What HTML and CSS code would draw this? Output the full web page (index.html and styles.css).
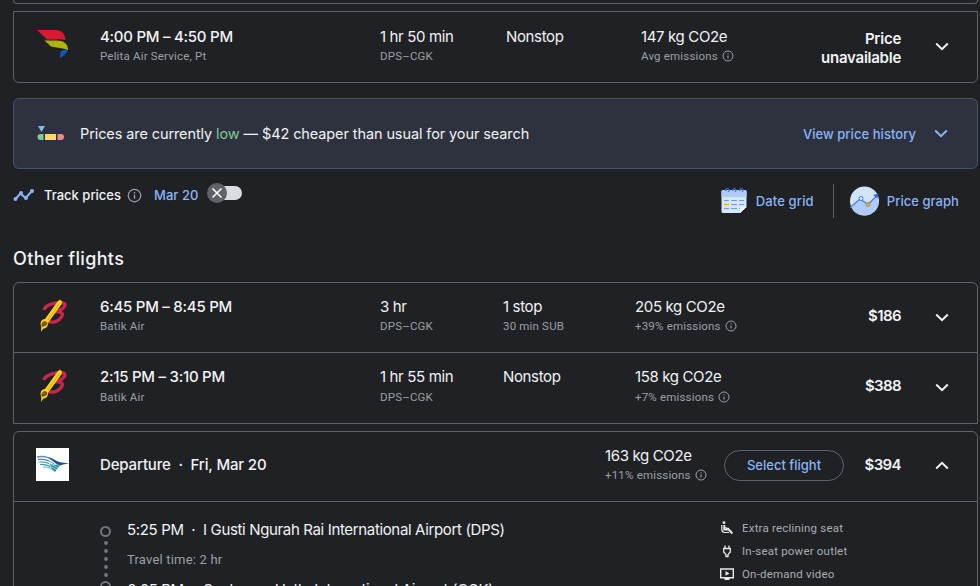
FILE: index.html
```html
<!doctype html>
<html lang="en">
  <head>
    <meta charset="UTF-8">
    <meta name="viewport" content="width=device-width, initial-scale=1.0">
    <title>Flights</title>
    <link rel="stylesheet" href="styles.css">
  </head>
  <body>
    <!-- Shared icons -->
    <svg class="sprite" width="0" height="0">
      <symbol id="info" viewBox="0 0 12 12">
        <circle cx="6" cy="6" r="5" fill="none" stroke="currentColor" stroke-width="1"/>
        <path d="M6 5.4v3.2M6 3.2v1.1" stroke="currentColor" stroke-width="1.1"/>
      </symbol>
      <symbol id="chevron" viewBox="0 0 14 9">
        <path d="M1.2 1.5L7 7.2l5.8-5.7" fill="none" stroke="currentColor" stroke-width="2"/>
      </symbol>
      <symbol id="batik" viewBox="0 0 30 34">
        <path d="M5 11C6 6 17 2.500 24 4c5 1.500 0 7-9 9 8-1 10 2 7 5.500-3 3.800-8 5.500-13 4" fill="none" stroke="#c9264f" stroke-width="3.400"/>
        <path d="M18.500 2.500l2.500-2 2 2-.3 2.500L9 24c0 4-2 5-5 6l-2 3 .3-5C.7 24 2 20 6 20z" fill="#fbd21d"/>
        <path d="M3 27c0-4 2-5 4-4s0 4-3 4z" fill="#8a6212" stroke="#5b390d" stroke-width="1"/>
        <path d="M20.500 4.500L9 21" stroke="#c79c10" stroke-width=".7"/>
      </symbol>
    </svg>

    <div class="card card-prev"></div>

    <div class="card card-last">
      <div class="row row-top">
        <div class="logo">
          <svg width="32" height="30" viewBox="0 0 32 30">
            <path d="M0 0h18c7 0 10 4 10.500 10C23 8.500 16 10 10 9.500z" fill="#d71a30"/>
            <path d="M7.500 10.500H19c8 0 12 3 12 10-4-3-9-2-17-4z" fill="#b0b20d"/>
            <path d="M23 28c0-6 1-9 7.500-8-1 3.500-4 6.500-7.500 8z" fill="#1257c0"/>
          </svg>
        </div>
        <div><div class="main time">4:00 PM – 4:50 PM</div><div class="sub">Pelita Air Service, Pt</div></div>
        <div><div class="main">1 hr 50 min</div><div class="sub">DPS–CGK</div></div>
        <div><div class="main">Nonstop</div></div>
        <div><div class="main">147 kg CO2e</div><div class="sub">Avg emissions <svg class="info"><use href="#info"/></svg></div></div>
        <div class="price price-none">Price<br>unavailable</div>
        <svg class="chevron"><use href="#chevron"/></svg>
      </div>
    </div>

    <!-- Price insight -->
    <div class="insight">
      <svg class="gauge" width="28" height="16" viewBox="0 0 28 16">
        <path d="M1 0h7L4.500 6z" fill="#8ab4f8"/>
        <path d="M6.500 8v6H3.500a3 3 0 0 1 0-6z" fill="#81c995"/>
        <path d="M8 8h11v6H8z" fill="#fdd663"/>
        <path d="M20.500 8H24a3 3 0 0 1 0 6h-3.500z" fill="#f28b82"/>
      </svg>
      <span class="insight-text">Prices are currently <span class="low">low</span> — $42 cheaper than usual for your search</span>
      <span class="link history">View price history</span>
      <svg class="chevron"><use href="#chevron"/></svg>
    </div>

    <!-- Tracking and tools -->
    <div class="tools">
      <svg class="trend" width="22" height="14" viewBox="0 0 22 14">
        <path d="M2.500 11l5-5.500 5 4.500 7-7.500" fill="none" stroke="#8ab4f8" stroke-width="2"/>
        <g fill="#8ab4f8"><circle cx="2.500" cy="11" r="2"/><circle cx="8" cy="5" r="2"/><circle cx="13" cy="10" r="2"/><circle cx="19" cy="3" r="2"/></g>
      </svg>
      <span class="track">Track prices</span>
      <svg class="info info-lg"><use href="#info"/></svg>
      <span class="link date">Mar 20</span>
      <span class="switch">
        <svg width="20" height="20" viewBox="0 0 20 20">
          <circle cx="10" cy="10" r="10" fill="#5f6368"/>
          <path d="M5.500 5.500l9 9M14.500 5.500l-9 9" stroke="#fff" stroke-width="1.500"/>
        </svg>
      </span>
      <div class="views">
        <svg width="26" height="27" viewBox="0 0 26 27">
          <path d="M2 3h22a1.500 1.500 0 0 1 1.500 1.500V20L19 26H2a1.500 1.500 0 0 1-1.500-1.500v-20A1.500 1.500 0 0 1 2 3z" fill="#d6e6fd"/>
          <path d="M2 3h22a1.500 1.500 0 0 1 1.500 1.500V10H.5V4.500A1.500 1.500 0 0 1 2 3z" fill="#aecbfa"/>
          <path d="M19 26v-6h6.500z" fill="#f5f9ff"/>
          <g fill="none" stroke="#3d72df" stroke-width="1.200"><path d="M5 4a1.600 1.600 0 1 1 2 .7M12 4a1.600 1.600 0 1 1 2 .7M19 4a1.600 1.600 0 1 1 2 .7"/></g>
          <path d="M3 13.500h5M10 13.500h6M18 13.500h5M10 17.500h6M18 17.500h5M3 21.500h5M10 21.500h6M18 21.500h1" stroke="#669df6" stroke-width="1.200"/>
          <path d="M3 17.500h5" stroke="#f9ab00" stroke-width="1.300"/>
        </svg>
        <span class="link grid-link">Date grid</span>
        <span class="divider"></span>
        <svg width="30" height="30" viewBox="0 0 30 30">
          <circle cx="14.500" cy="15" r="14.500" fill="#d2e3fc"/>
          <path d="M1 20l10-7 8 5 8-7c4 8-2 18-12 18.500C8 29.500 3 26 1 20z" fill="#aecbfa"/>
          <path d="M0 21.500L10 13l8 5.500 8-8" fill="none" stroke="#4479df" stroke-width="1.200"/>
          <path d="M23 9l5.500-1.500-1 5z" fill="#3367d6"/>
          <circle cx="11" cy="12.500" r="2" fill="#e8f0fe" stroke="#4479df"/>
          <circle cx="18" cy="18.500" r="2" fill="#f9ab00" stroke="#7d83a0" stroke-width=".7"/>
        </svg>
        <span class="link graph-link">Price graph</span>
      </div>
    </div>

    <h3>Other flights</h3>

    <div class="card flights">
      <div class="row">
        <div class="logo batik"><svg width="30" height="34"><use href="#batik"/></svg></div>
        <div><div class="main time">6:45 PM – 8:45 PM</div><div class="sub">Batik Air</div></div>
        <div><div class="main">3 hr</div><div class="sub">DPS–CGK</div></div>
        <div><div class="main">1 stop</div><div class="sub">30 min SUB</div></div>
        <div><div class="main">205 kg CO2e</div><div class="sub">+39% emissions <svg class="info"><use href="#info"/></svg></div></div>
        <div class="price">$186</div>
        <svg class="chevron"><use href="#chevron"/></svg>
      </div>
      <div class="row">
        <div class="logo batik"><svg width="30" height="34"><use href="#batik"/></svg></div>
        <div><div class="main time">2:15 PM – 3:10 PM</div><div class="sub">Batik Air</div></div>
        <div><div class="main">1 hr 55 min</div><div class="sub">DPS–CGK</div></div>
        <div><div class="main">Nonstop</div></div>
        <div><div class="main">158 kg CO2e</div><div class="sub">+7% emissions <svg class="info"><use href="#info"/></svg></div></div>
        <div class="price">$388</div>
        <svg class="chevron"><use href="#chevron"/></svg>
      </div>
    </div>

    <!-- Expanded flight -->
    <div class="card expanded">
      <div class="row row-open">
        <div class="logo garuda">
          <svg width="33" height="33" viewBox="0 0 33 33">
            <path d="M1 9c7-1.500 12 0 17 4" fill="none" stroke="#5f8fb8" stroke-width="1.300"/>
            <path d="M2 11.500c6-1 11 1 16 4" fill="none" stroke="#2f6c9c" stroke-width="1.200"/>
            <path d="M3 14c6-.5 10 1 15 4" fill="none" stroke="#55a7b7" stroke-width="1.200"/>
            <path d="M4 16.500c5-.3 9 1 14 4" fill="none" stroke="#3f9cab" stroke-width="1.200"/>
            <path d="M7 19c5-.3 8 1 12 4" fill="none" stroke="#81c3c4" stroke-width="1.200"/>
            <path d="M12 9.500c6 .5 9 5 14 5l7 1-6 1c-2 1-4 1-5 2-3-4-6-7-10-9z" fill="#17528a"/>
            <path d="M14 16l10 1.500-5 6.500-3-3z" fill="#168f9b"/>
            <path d="M13 12.500l11 5.500M13 15l9 5M14 18l7 4" stroke="#fff" stroke-width=".6"/>
          </svg>
        </div>
        <div class="main leg">Departure &nbsp;·&nbsp; Fri, Mar 20</div>
        <div><div class="main">163 kg CO2e</div><div class="sub">+11% emissions <svg class="info"><use href="#info"/></svg></div></div>
        <button class="select">Select flight</button>
        <div class="price">$394</div>
        <svg class="chevron up"><use href="#chevron"/></svg>
      </div>
      <div class="details">
        <div class="rail">
          <span class="stop"></span>
          <span class="dot"></span><span class="dot"></span><span class="dot"></span><span class="dot"></span><span class="dot"></span>
          <span class="stop"></span>
        </div>
        <div class="legs">
          <div class="airport">5:25 PM &nbsp;·&nbsp; I Gusti Ngurah Rai International Airport (DPS)</div>
          <div class="travel">Travel time: 2 hr</div>
          <div class="airport">6:25 PM &nbsp;·&nbsp; Soekarno-Hatta International Airport (CGK)</div>
        </div>
        <ul class="amenities">
          <li>
            <svg width="14" height="14" viewBox="0 0 14 14" fill="none" stroke="#e8eaed">
              <circle cx="4" cy="1.700" r="1.400" fill="#e8eaed" stroke="none"/>
              <path d="M1.800 4v4.500c0 2 1 3 3 3H9" stroke-width="1.200"/>
              <path d="M4.300 4v4.500h4.500l3.500 4" stroke-width="2"/>
              <path d="M5 6.500c1.500 1 2.500 1 4 .8" stroke-width="1.200"/>
            </svg>
            Extra reclining seat
          </li>
          <li>
            <svg width="14" height="14" viewBox="0 0 14 14" fill="none" stroke="#e8eaed" stroke-width="1.300">
              <path d="M5 1.500v3M9 1.500v3M3.700 4.500h6.600v3.500L8 10.500V12.500H6v-2L3.700 8z"/>
            </svg>
            In-seat power outlet
          </li>
          <li>
            <svg width="14" height="14" viewBox="0 0 14 14" fill="none" stroke="#e8eaed" stroke-width="1.400">
              <path d="M.7 2h12.600v8.800H.7zM4.500 12.200h5"/>
              <path d="M5.500 4v4.800l4-2.400z" fill="#e8eaed" stroke="none"/>
            </svg>
            On-demand video
          </li>
        </ul>
      </div>
    </div>
  </body>
</html>
```
FILE: styles.css
```css
:root {
  --bg: #202124;
  --line: #5f6368;
  --text: #f1f3f4;
  --muted: #9aa0a6;
  --blue: #8ab4f8;
}
* {
  box-sizing: border-box;
}
html {
  overflow: hidden;
}
body {
  font-family: 'Inter', 'Roboto', sans-serif;
  background: var(--bg);
  color: var(--text);
  margin: 0;
  padding: 0 2px 0 13px;
  height: 586px;
  overflow: hidden;
}
svg {
  display: block;
  flex: none;
}
.sprite {
  position: absolute;
}
.card {
  border: 1px solid var(--line);
}
.card-prev {
  height: 4px;
  border-top: none;
  border-radius: 0 0 6px 6px;
}
.card-last {
  margin-top: 7px;
  height: 72px;
  border-radius: 0 0 6px 6px;
}
/* Flight rows */
.row {
  display: grid;
  grid-template-columns: 86px 280px 123px 132px 164px 102px 1fr;
  height: 70px;
  padding-top: 14px;
}
.row-top {
  grid-template-columns: 86px 280px 126px 135px 158px 102px 1fr;
  padding-top: 15px;
}
.main {
  font-size: 15px;
  line-height: 20px;
  letter-spacing: -0.36px;
  white-space: nowrap;
}
.time {
  font-weight: 500;
  letter-spacing: -0.26px;
}
.sub {
  display: flex;
  align-items: center;
  gap: 4px;
  font-family: 'Roboto', sans-serif;
  font-size: 11.5px;
  line-height: 18px;
  letter-spacing: 0.18px;
  color: var(--muted);
  white-space: nowrap;
}
.flights .row + .row .sub {
  line-height: 20px;
}
.logo {
  padding: 3px 0 0 23px;
}
.batik {
  padding: 2px 0 0 25px;
}
.price {
  font-size: 15px;
  font-weight: 600;
  line-height: 19px;
  letter-spacing: -0.6px;
  text-align: right;
  padding-top: 9px;
}
.price-none {
  padding-top: 2px;
  letter-spacing: -0.25px;
}
.info {
  width: 12px;
  height: 12px;
}
.chevron {
  width: 14px;
  height: 9px;
}
.row .chevron {
  margin: 16px 0 0 34px;
}
.row-top .chevron {
  margin-top: 15px;
}
.row .up {
  margin-top: 15px;
  transform: scaleY(-1);
}
/* Price insight */
.insight {
  display: flex;
  align-items: center;
  height: 71px;
  margin-top: 15px;
  padding: 0 29px 0 23px;
  background: #2e323e;
  border: 1px solid #44536e;
  border-radius: 6px;
  font-size: 14.5px;
  letter-spacing: -0.1px;
}
.insight-text {
  margin-left: 15px;
}
.low {
  color: #81c995;
}
.link {
  color: var(--blue);
  font-size: 13px;
  font-weight: 500;
  letter-spacing: 0.05px;
  white-space: nowrap;
}
.history {
  margin: 0 18px 0 auto;
}
.insight .chevron {
  color: var(--blue);
}
/* Tracking and tools */
.tools {
  display: flex;
  align-items: center;
  height: 52px;
}
.track {
  font-size: 13px;
  font-weight: 500;
  margin: 0 6px 0 9px;
}
.info-lg {
  width: 15px;
  height: 15px;
  color: var(--muted);
}
.date {
  margin: 0 16px 0 12px;
}
.switch {
  width: 28px;
  height: 14px;
  margin-top: -4px;
  border-radius: 7px;
  background: #dadce0;
  display: flex;
  align-items: center;
}
.switch svg {
  margin-left: -7px;
}
.views {
  display: flex;
  align-items: center;
  margin: 11px 19px 0 auto;
}
.grid-link {
  margin: 0 19px 0 9px;
  letter-spacing: 0.15px;
}
.divider {
  width: 1px;
  height: 34px;
  margin-right: 16px;
  background: var(--line);
}
.graph-link {
  margin-left: 7px;
}
h3 {
  margin: 25px 0 11px;
  font-size: 18px;
  font-weight: 500;
  line-height: 25px;
  letter-spacing: 0.35px;
}
.flights {
  border-radius: 6px 6px 0 0;
}
.flights .row + .row {
  border-top: 1px solid var(--line);
  height: 71px;
}
.flights .row:first-child {
  height: 69px;
}
/* Expanded flight, runs past the bottom of the window */
.expanded {
  height: 200px;
  margin-top: 7px;
  border-radius: 6px 6px 0 0;
}
.row-open {
  grid-template-columns: 86px 505px 119px 120px 57px 1fr;
  height: 70px;
  border-bottom: 1px solid var(--line);
}
.garuda svg {
  background: #fff;
}
.garuda {
  padding: 2px 0 0 22px;
}
.leg {
  padding-top: 9px;
  font-weight: 500;
  letter-spacing: -0.15px;
}
.select {
  height: 31px;
  margin-top: 4px;
  padding: 0 0 2px;
  border: 1px solid var(--line);
  border-radius: 16px;
  background: none;
  color: var(--blue);
  font: 500 13px 'Inter', sans-serif;
}
.details {
  display: flex;
  padding: 18px 0 0 86px;
}
.rail {
  display: flex;
  flex-direction: column;
  align-items: center;
  width: 11px;
  padding-top: 6px;
}
.stop {
  flex: none;
  width: 11px;
  height: 11px;
  border: 2px solid #70757a;
  border-radius: 50%;
  margin-bottom: 4px;
}
.dot {
  flex: none;
  width: 4px;
  height: 4px;
  border-radius: 50%;
  background: #70757a;
  margin-bottom: 4px;
}
.legs {
  width: 595px;
  padding-left: 16px;
}
.airport {
  font-size: 15px;
  line-height: 20px;
  letter-spacing: -0.35px;
  white-space: nowrap;
}
.travel {
  margin: 10px 0;
  font-family: 'Roboto', sans-serif;
  font-size: 13px;
  line-height: 20px;
  letter-spacing: 0.2px;
  color: var(--muted);
}
.amenities {
  list-style: none;
  margin: -4px 0 0 14px;
  padding: 0;
}
.amenities li {
  display: flex;
  align-items: center;
  gap: 8px;
  height: 23px;
  font-family: 'Roboto', sans-serif;
  font-size: 11.5px;
  letter-spacing: 0.2px;
  color: #a8adb3;
}
```
